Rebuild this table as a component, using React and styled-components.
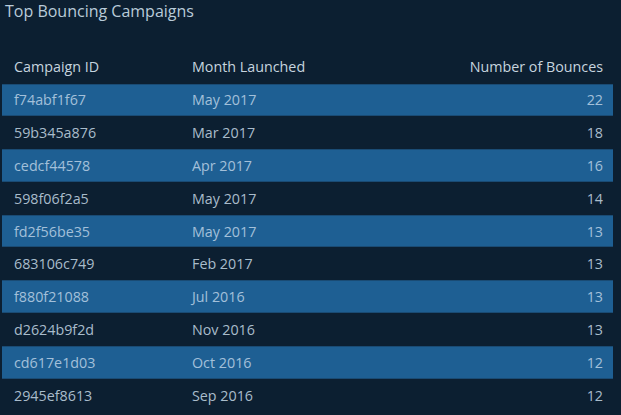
import styled, { createGlobalStyle } from 'styled-components'

const campaigns = [
  { id: 'f74abf1f67', month: 'May 2017', bounces: 22 },
  { id: '59b345a876', month: 'Mar 2017', bounces: 18 },
  { id: 'cedcf44578', month: 'Apr 2017', bounces: 16 },
  { id: '598f06f2a5', month: 'May 2017', bounces: 14 },
  { id: 'fd2f56be35', month: 'May 2017', bounces: 13 },
  { id: '683106c749', month: 'Feb 2017', bounces: 13 },
  { id: 'f880f21088', month: 'Jul 2016', bounces: 13 },
  { id: 'd2624b9f2d', month: 'Nov 2016', bounces: 13 },
  { id: 'cd617e1d03', month: 'Oct 2016', bounces: 12 },
  { id: '2945ef8613', month: 'Sep 2016', bounces: 12 },
]

const GlobalStyle = createGlobalStyle`
  body {
    margin: 0;
    background: #0c1f31;
    font-family: "Open Sans", "Noto Sans", sans-serif;
  }
`

const Panel = styled.div`
  width: 621px;
  height: 415px;
  background: #0c1f31;
  overflow: hidden;
`

const Title = styled.h2`
  margin: 0;
  padding: 0 0 1px 5px;
  font-size: 16px;
  font-weight: 400;
  line-height: 22px;
  color: #b9cbd9;
`

const Table = styled.table`
  margin: 30px 0 0 2px;
  width: 611px;
  border-collapse: collapse;
  font-size: 14.3px;
`

const HeadCell = styled.th`
  height: 27.5px;
  padding: 0 ${p => (p.$right ? '10px' : '12px')} 3px;
  text-align: ${p => (p.$right ? 'right' : 'left')};
  font-weight: 400;
  color: #c6d4df;
  vertical-align: middle;
`

const Row = styled.tr`
  height: 32.8px;
  background: ${p => (p.$striped ? '#1e5f93' : 'transparent')};
  box-shadow: ${p => (p.$striped ? 'inset 0 1px 0 #1a4b74, inset 0 -1px 0 #1a4b74' : 'none')};
  color: ${p => (p.$striped ? '#a3c0da' : '#a9bccb')};
`

const Cell = styled.td`
  padding: 0 ${p => (p.$right ? '10px' : '12px')};
  text-align: ${p => (p.$right ? 'right' : 'left')};
  vertical-align: middle;
`

export default function App() {
  return (
    <Panel>
      <GlobalStyle />
      <Title>Top Bouncing Campaigns</Title>
      <Table>
        <thead>
          <tr>
            <HeadCell style={{ width: '154px' }}>Campaign ID</HeadCell>
            <HeadCell>Month Launched</HeadCell>
            <HeadCell $right>Number of Bounces</HeadCell>
          </tr>
        </thead>
        <tbody>
          {campaigns.map((c, i) => (
            <Row key={c.id} $striped={i % 2 === 0}>
              <Cell>{c.id}</Cell>
              <Cell>{c.month}</Cell>
              <Cell $right>{c.bounces}</Cell>
            </Row>
          ))}
        </tbody>
      </Table>
    </Panel>
  )
}
